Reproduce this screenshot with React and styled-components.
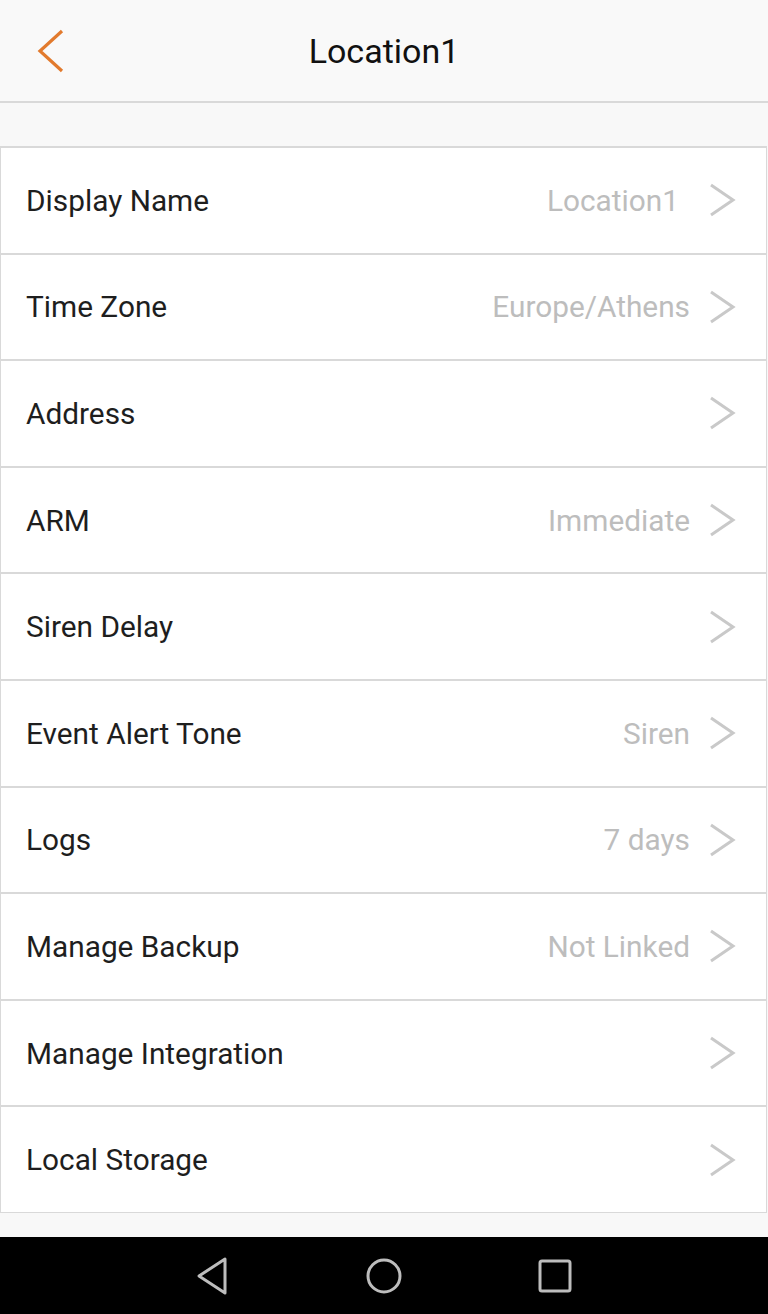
import React from 'react';
import styled, { createGlobalStyle } from 'styled-components';

const GlobalStyle = createGlobalStyle`
    html, body {
        margin: 0;
        padding: 0;
        background: #f8f8f8;
        font-family: Roboto, "Noto Sans", sans-serif;
    }
`;

const Page = styled.div`
    width: 768px;
    height: 1314px;
    display: flex;
    flex-direction: column;
    background: #f8f8f8;
    overflow: hidden;
`;

const Header = styled.header`
    height: 101px;
    flex-shrink: 0;
    display: grid;
    grid-template-columns: 100px 1fr 100px;
    align-items: center;
    background: #f9f9f9;
    border-bottom: 2px solid #d9d9d9;
`;

const BackButton = styled.button`
    border: 0;
    background: none;
    padding: 0 0 0 37px;
    height: 100%;
    display: flex;
    align-items: center;
    cursor: pointer;
`;

const Title = styled.h1`
    margin: 0;
    text-align: center;
    font-size: 34px;
    font-weight: 400;
    color: #111;
`;

const List = styled.ul`
    list-style: none;
    margin: 43px 1px 0 0;
    padding: 0;
    background: #fff;
    border: 1px solid #d9d9d9;
    border-top-width: 2px;
`;

const Row = styled.li`
    height: 104.6px;
    display: flex;
    align-items: center;
    padding: 0 30px 0 25px;
    & + & {
        border-top: 2px solid #d9d9d9;
    }
`;

const Label = styled.span`
    flex: 1;
    font-size: 29.8px;
    color: #1e1e1e;
`;

const Value = styled.span`
    font-size: 29.8px;
    color: #bdbdbd;
    margin-right: ${(props) => props.$gap || 18}px;
`;

const Spacer = styled.div`
    flex: 1;
`;

const NavBar = styled.nav`
    height: 77px;
    flex-shrink: 0;
    background: #000;
    display: flex;
    justify-content: center;
    align-items: center;
    gap: 135px;
`;

const Chevron = () => (
    <svg width="28" height="34" viewBox="0 0 28 34">
        <path d="M3 2 L25 17 L3 32" fill="none" stroke="#c9c9c9" strokeWidth="3" />
    </svg>
);

const BackIcon = () => (
    <svg width="28" height="44" viewBox="0 0 28 44">
        <path d="M25 2 L3 22 L25 42" fill="none" stroke="#e27a2d" strokeWidth="3.2" />
    </svg>
);

const rows = [
    { label: 'Display Name', value: 'Location1', gap: 29 },
    { label: 'Time Zone', value: 'Europe/Athens' },
    { label: 'Address' },
    { label: 'ARM', value: 'Immediate' },
    { label: 'Siren Delay' },
    { label: 'Event Alert Tone', value: 'Siren' },
    { label: 'Logs', value: '7 days' },
    { label: 'Manage Backup', value: 'Not Linked' },
    { label: 'Manage Integration' },
    { label: 'Local Storage' },
];

function App() {
    return (
        <Page>
            <GlobalStyle />
            <Header>
                <BackButton aria-label="Back">
                    <BackIcon />
                </BackButton>
                <Title>Location1</Title>
                <div />
            </Header>
            <List>
                {rows.map((r) => (
                    <Row key={r.label}>
                        <Label>{r.label}</Label>
                        {r.value && <Value $gap={r.gap}>{r.value}</Value>}
                        <Chevron />
                    </Row>
                ))}
            </List>
            <Spacer />
            <NavBar>
                <svg width="34" height="38" viewBox="0 0 34 38">
                    <path d="M29 2 L29 36 L3 19 Z" fill="none" stroke="#bdbdbd" strokeWidth="3" strokeLinejoin="round" />
                </svg>
                <svg width="38" height="38" viewBox="0 0 38 38">
                    <ellipse cx="19" cy="19" rx="16" ry="16" fill="none" stroke="#bdbdbd" strokeWidth="3" />
                </svg>
                <svg width="34" height="34" viewBox="0 0 34 34">
                    <rect x="2" y="2" width="30" height="30" rx="2" fill="none" stroke="#bdbdbd" strokeWidth="3" />
                </svg>
            </NavBar>
        </Page>
    );
}

export default App;
